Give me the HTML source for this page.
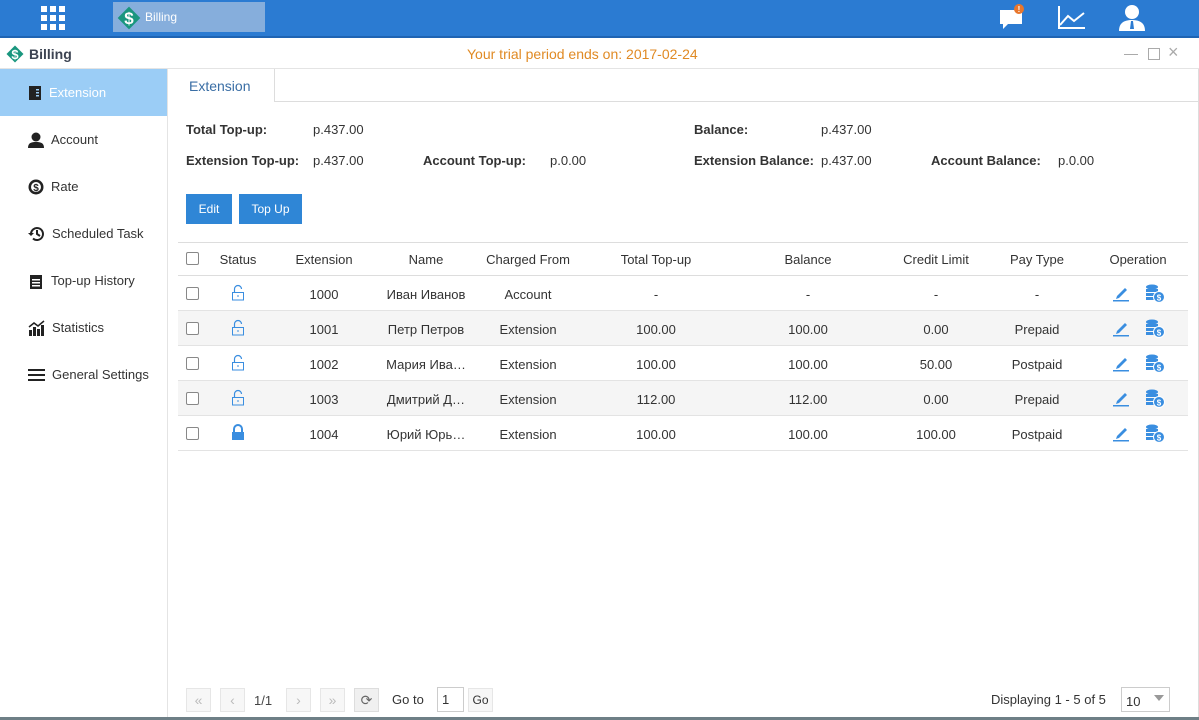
<!DOCTYPE html>
<html><head><meta charset="utf-8"><style>
*{margin:0;padding:0;box-sizing:border-box}
body{width:1199px;height:720px;position:relative;overflow:hidden;background:#fff;font-family:"Liberation Sans",Arial,sans-serif;font-size:13px;color:#333}
.a{position:absolute}
.top{left:0;top:0;width:1199px;height:38px;background:#2b7bd2;border-bottom:2px solid #1f64b3}
.side .it{position:absolute;left:0;width:167px;height:47px;display:flex;align-items:center;padding-left:28px;font-size:13px;color:#333}
.side svg{margin-right:7px}
.c{position:absolute;text-align:center;transform:translateX(-50%);white-space:nowrap}
.row{position:absolute;left:178px;width:1010px;height:35px;border-bottom:1px solid #e3e3e3}
.cb{position:absolute;left:186px;width:13px;height:13px;border:1px solid #888;border-radius:2px;background:#fff}
.btn{position:absolute;height:30px;background:#2f86d6;color:#fff;font-size:12px;line-height:30px;text-align:center}
.pg{position:absolute;top:688px;width:25px;height:24px;border:1px solid #e6e6e6;background:#f7f7f7;color:#bbb;text-align:center;line-height:22px;font-size:14px}
b{font-weight:bold}
</style></head><body>
<div class="a top"></div>
<svg class="a" style="left:41px;top:6px" width="25" height="25"><g fill="#fff"><rect x="0" y="0" width="6" height="6"/><rect x="9" y="0" width="6" height="6"/><rect x="18" y="0" width="6" height="6"/><rect x="0" y="9" width="6" height="6"/><rect x="9" y="9" width="6" height="6"/><rect x="18" y="9" width="6" height="6"/><rect x="0" y="18" width="6" height="6"/><rect x="9" y="18" width="6" height="6"/><rect x="18" y="18" width="6" height="6"/></g></svg>
<div class="a" style="left:113px;top:2px;width:152px;height:30px;background:#86aedc"></div>
<svg class="a" style="left:117px;top:6px" width="24" height="24"><rect x="4" y="4" width="16" height="16" transform="rotate(45 12 12)" fill="#19967e"/><text x="12" y="18" fill="#fff" font-size="17" font-weight="bold" text-anchor="middle" font-family="Liberation Sans">$</text></svg>
<div class="a" style="left:145px;top:10px;color:#fff;font-size:12px">Billing</div>
<svg class="a" style="left:998px;top:3px" width="30" height="28"><path d="M2 7h22v14H10l-5 5v-5H2z" fill="#fff"/><circle cx="21" cy="6" r="5" fill="#e8762c"/><text x="21" y="9" fill="#fff" font-size="8" text-anchor="middle" font-weight="bold">!</text></svg>
<svg class="a" style="left:1057px;top:5px" width="30" height="26"><path d="M2 1v22h26M3 20l8-9 6 5 10-8" stroke="#fff" stroke-width="2" fill="none"/></svg>
<svg class="a" style="left:1117px;top:3px" width="30" height="28"><circle cx="15" cy="9" r="7" fill="#fff"/><path d="M2 28c0-8 5-11 13-11s13 3 13 11z" fill="#fff"/><path d="M14 18h2l1 8h-4z" fill="#2b7bd2"/></svg>
<svg class="a" style="left:5px;top:44px" width="20" height="20"><rect x="4" y="4" width="12" height="12" transform="rotate(45 10 10)" fill="#19967e"/><text x="10" y="15" fill="#fff" font-size="13" font-weight="bold" text-anchor="middle">$</text></svg>
<div class="a" style="left:29px;top:46px;font-weight:bold;font-size:14px;color:#3d4452">Billing</div>
<div class="a" style="left:467px;top:46px;color:#e08a24;font-size:14px">Your trial period ends on: 2017-02-24</div>
<div class="a" style="left:1124px;top:54px;width:14px;height:1px;background:#aaa"></div>
<div class="a" style="left:1148px;top:48px;width:12px;height:12px;border:1px solid #aaa"></div>
<div class="a" style="left:1168px;top:42px;color:#aaa;font-size:18px">×</div>
<div class="a" style="left:0;top:68px;width:1199px;height:1px;background:#e4e4e4"></div>
<div class="side">
<div class="it" style="top:69px;background:#9bcdf6;color:#fff"><svg width="14" height="16"><rect x="1" y="1" width="12" height="14" fill="#222"/><rect x="8" y="4" width="3" height="1.5" fill="#9bcdf6"/><rect x="8" y="7" width="3" height="1.5" fill="#9bcdf6"/><rect x="8" y="10" width="3" height="1.5" fill="#9bcdf6"/></svg>Extension</div>
<div class="it" style="top:116px"><svg width="16" height="16"><circle cx="8" cy="5" r="4.5" fill="#222"/><path d="M0 16c0-5 3-6 8-6s8 1 8 6z" fill="#222"/></svg>Account</div>
<div class="it" style="top:163px"><svg width="16" height="16"><circle cx="8" cy="8" r="7.5" fill="#222"/><circle cx="8" cy="8" r="5" fill="#fff"/><text x="8" y="12" font-size="10" font-weight="bold" text-anchor="middle" fill="#222">$</text></svg>Rate</div>
<div class="it" style="top:210px"><svg width="17" height="16"><path d="M3 8a6 6 0 1 1 2 4.5" stroke="#222" stroke-width="2" fill="none"/><path d="M0 7h6l-3 3z" fill="#222"/><path d="M9 4v4l3 2" stroke="#222" stroke-width="2" fill="none"/></svg>Scheduled Task</div>
<div class="it" style="top:257px"><svg width="16" height="16"><rect x="2" y="2" width="12" height="14" fill="#222"/><rect x="4" y="6" width="8" height="1.5" fill="#fff"/><rect x="4" y="9" width="8" height="1.5" fill="#fff"/><rect x="4" y="12" width="8" height="1.5" fill="#fff"/></svg>Top-up History</div>
<div class="it" style="top:304px"><svg width="17" height="16"><rect x="1" y="10" width="3" height="6" fill="#222"/><rect x="5" y="7" width="3" height="9" fill="#222"/><rect x="9" y="9" width="3" height="7" fill="#222"/><rect x="13" y="5" width="3" height="11" fill="#222"/><path d="M1 7l5-4 4 3 6-5" stroke="#222" stroke-width="1.5" fill="none"/></svg>Statistics</div>
<div class="it" style="top:351px"><svg width="17" height="16"><rect x="0" y="2" width="17" height="2" fill="#222"/><rect x="0" y="7" width="17" height="2" fill="#222"/><rect x="0" y="12" width="17" height="2" fill="#222"/></svg>General Settings</div>
</div>
<div class="a" style="left:167px;top:69px;width:1px;height:651px;background:#e4e4e4"></div>
<div class="a" style="left:168px;top:101px;width:1031px;height:1px;background:#ddd"></div>
<div class="a" style="left:168px;top:69px;width:107px;height:33px;background:#fff;border-right:1px solid #ddd;color:#3a6ea5;font-size:14px;padding:9px 0 0 21px">Extension</div>
<div class="a" style="left:1198px;top:69px;width:1px;height:651px;background:#ddd"></div>
<div class="a" style="left:186px;top:122px"><b>Total Top-up:</b></div><div class="a" style="left:313px;top:122px">p.437.00</div>
<div class="a" style="left:694px;top:122px"><b>Balance:</b></div><div class="a" style="left:821px;top:122px">p.437.00</div>
<div class="a" style="left:186px;top:153px"><b>Extension Top-up:</b></div><div class="a" style="left:313px;top:153px">p.437.00</div>
<div class="a" style="left:423px;top:153px"><b>Account Top-up:</b></div><div class="a" style="left:550px;top:153px">p.0.00</div>
<div class="a" style="left:694px;top:153px"><b>Extension Balance:</b></div><div class="a" style="left:821px;top:153px">p.437.00</div>
<div class="a" style="left:931px;top:153px"><b>Account Balance:</b></div><div class="a" style="left:1058px;top:153px">p.0.00</div>
<div class="btn" style="left:186px;top:194px;width:46px">Edit</div>
<div class="btn" style="left:239px;top:194px;width:63px">Top Up</div>
<div class="a" style="left:178px;top:242px;width:1010px;height:1px;background:#ddd"></div>
<div class="row" style="top:242px;height:34px;border-bottom-color:#ddd"></div>
<div class="cb" style="top:252px"></div>
<div class="c" style="left:238px;top:252px">Status</div><div class="c" style="left:324px;top:252px">Extension</div><div class="c" style="left:426px;top:252px">Name</div><div class="c" style="left:528px;top:252px">Charged From</div><div class="c" style="left:656px;top:252px">Total Top-up</div><div class="c" style="left:808px;top:252px">Balance</div><div class="c" style="left:936px;top:252px">Credit Limit</div><div class="c" style="left:1037px;top:252px">Pay Type</div><div class="c" style="left:1138px;top:252px">Operation</div>

<div class="row" style="top:276px"></div>
<div class="row" style="top:311px;background:#f5f5f5"></div>
<div class="row" style="top:346px"></div>
<div class="row" style="top:381px;background:#f5f5f5"></div>
<div class="row" style="top:416px"></div>

<div id="rows"></div>
<script>
var d=[["1000","Иван Иванов","Account","-","-","-","-",0],["1001","Петр Петров","Extension","100.00","100.00","0.00","Prepaid",0],["1002","Мария Ива…","Extension","100.00","100.00","50.00","Postpaid",0],["1003","Дмитрий Д…","Extension","112.00","112.00","0.00","Prepaid",0],["1004","Юрий Юрь…","Extension","100.00","100.00","100.00","Postpaid",1]];
var h="",xs=[324,426,528,656,808,936,1037];
d.forEach(function(r,i){var t=276+i*35,ty=t+11;
h+='<div class="cb" style="top:'+(t+11)+'px"></div>';
h+=r[7]?'<svg class="a" style="left:230px;top:'+(t+8)+'px" width="16" height="17"><path d="M4 8V5a4 4 0 0 1 8 0v3" stroke="#3a8ee0" stroke-width="2" fill="none"/><rect x="2" y="8" width="12" height="8" fill="#3a8ee0"/></svg>':'<svg class="a" style="left:230px;top:'+(t+8)+'px" width="16" height="17"><path d="M4.5 8V5a3.5 3.5 0 0 1 7 0" stroke="#3a8ee0" stroke-width="1.2" fill="none"/><rect x="2.5" y="8.5" width="11" height="7.5" stroke="#3a8ee0" fill="none"/><path d="M8 11v2" stroke="#3a8ee0"/></svg>';
for(var k=0;k<7;k++)h+='<div class="c" style="left:'+xs[k]+'px;top:'+ty+'px">'+r[k]+'</div>';
h+='<svg class="a" style="left:1112px;top:'+(t+9)+'px" width="18" height="17"><path d="M5 11l8-8 2 2-8 8-3 1z" fill="#3a8ee0"/><rect x="1" y="15" width="16" height="1.5" fill="#3a8ee0"/></svg>';
h+='<svg class="a" style="left:1145px;top:'+(t+8)+'px" width="20" height="19"><ellipse cx="7" cy="3" rx="6" ry="2.5" fill="#3a8ee0"/><rect x="1" y="5" width="12" height="3" fill="#3a8ee0"/><rect x="1" y="9" width="12" height="3" fill="#3a8ee0"/><rect x="1" y="13" width="10" height="3" fill="#3a8ee0"/><circle cx="14" cy="13" r="5.5" fill="#3a8ee0" stroke="#fff"/><text x="14" y="16.5" font-size="8" fill="#fff" text-anchor="middle" font-weight="bold">$</text></svg>';
});
document.getElementById("rows").innerHTML=h;
</script>
<div class="pg" style="left:186px">«</div><div class="pg" style="left:220px">‹</div>
<div class="a" style="left:254px;top:693px;color:#444">1/1</div>
<div class="pg" style="left:286px">›</div><div class="pg" style="left:320px">»</div>
<div class="pg" style="left:354px;color:#666;background:#f0f0f0;border-color:#ddd">⟳</div>
<div class="a" style="left:392px;top:692px">Go to</div>
<div class="a" style="left:437px;top:687px;width:27px;height:25px;border:1px solid #ccc;padding:4px 0 0 4px">1</div>
<div class="pg" style="left:468px;color:#333;font-size:12px">Go</div>
<div class="a" style="left:991px;top:692px">Displaying 1 - 5 of 5</div>
<div class="a" style="left:1121px;top:687px;width:49px;height:25px;border:1px solid #ccc;padding:6px 0 0 4px">10</div>
<div class="a" style="left:1154px;top:695px;border:5px solid transparent;border-top:6px solid #999"></div>
<div class="a" style="left:0;top:717px;width:1199px;height:3px;background:#6e7f86"></div>
</body></html>
